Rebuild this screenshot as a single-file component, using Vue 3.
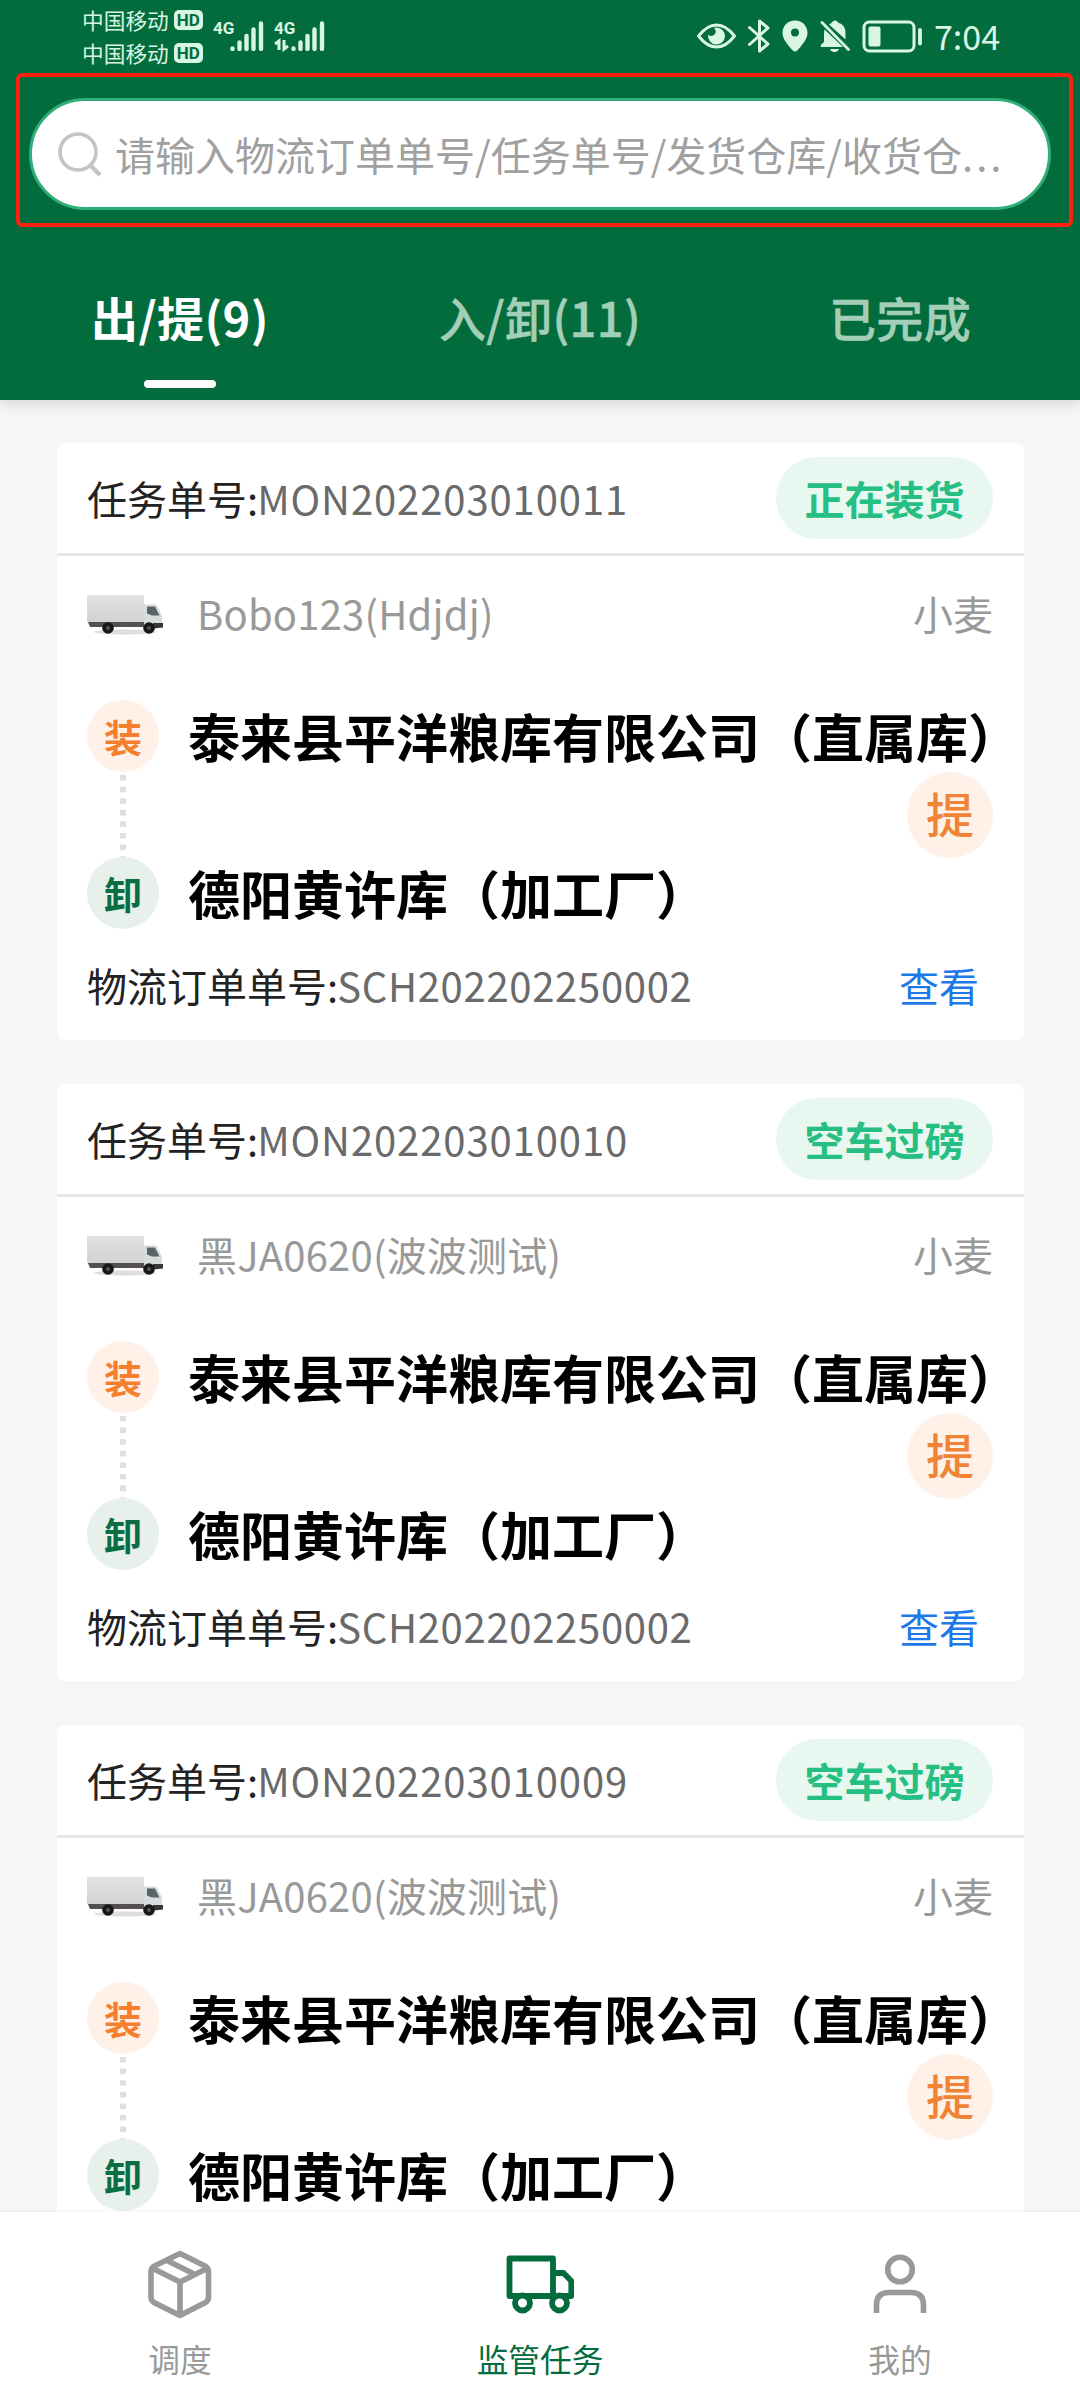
<template>
  <div class="page">
    <header class="header">
      <div class="status-bar">
        <div class="carriers">
          <div v-for="n in 2" :key="n" class="carrier">
            <span>中国移动</span>
            <span class="hd">HD</span>
          </div>
        </div>
        <div v-for="n in 2" :key="'s' + n" class="signal">
          <span class="net">4G</span>
          <svg width="52" height="34" viewBox="0 0 52 34">
            <g stroke="currentColor" stroke-width="4.4" stroke-linecap="round">
              <path d="M19.500 28.500v.4M26.500 22.500v6.400M33.500 16v12.900M40.500 9.500v19.400M48 3.500v25.400" />
            </g>
            <path v-if="n === 2" d="M1 24l4-3v9M10 20v9l4-3" fill="none" stroke="currentColor" stroke-width="3" />
          </svg>
        </div>
        <div class="status-right">
          <svg width="39" height="32" viewBox="0 0 39 32">
            <path d="M1.500 16Q10 5 19.500 5T37.500 16Q29 27 19.500 27T1.500 16z" fill="none" stroke="currentColor" stroke-width="3" stroke-linejoin="round" />
            <path d="M19.500 7.500a8.500 8.500 0 1 1-8.400 7.200q3.400 2.600 6.400-.2 2.600-3-.4-6.600z" fill="currentColor" />
          </svg>
          <svg width="22" height="34" viewBox="0 0 22 34">
            <path d="M1.500 8.500L20 25l-8.500 7V2L20 9 1.500 25.500" fill="none" stroke="currentColor" stroke-width="3" stroke-linejoin="round" stroke-linecap="round" />
          </svg>
          <svg width="26" height="32" viewBox="0 0 26 32">
            <path fill-rule="evenodd" d="M13 .5C5.700.5.500 6 .5 12.800.5 19 5 24 10.500 30.300q2.500 2.400 5 0C21 24 25.500 19 25.500 12.800 25.500 6 20.300.5 13 .5zM13 8.500a4 4 0 1 1 0 8 4 4 0 0 1 0-8z" fill="currentColor" />
          </svg>
          <svg width="30" height="33" viewBox="0 0 30 33">
            <path d="M4.500 9.500L23 27H.8v-2l3.200-3V13zM9 4.500l3-2Q13 .5 15 .5t3 2q7.500 2.300 7.500 10v7zM10 29h9q-1 3-4.500 3T10 29z" fill="currentColor" />
            <path d="M2 2.500l26.500 27" stroke="currentColor" stroke-width="2.800" stroke-linecap="round" />
          </svg>
          <svg width="61" height="33" viewBox="0 0 61 33">
            <rect x="2" y="2" width="50" height="29" rx="5.500" fill="none" stroke="currentColor" stroke-width="3" />
            <rect x="6.500" y="6.500" width="12" height="20" rx="2" fill="currentColor" />
            <path d="M58 10v13.500" stroke="currentColor" stroke-width="3.800" stroke-linecap="round" />
          </svg>
          <span class="time">7:04</span>
        </div>
      </div>

      <div class="search-frame">
        <div class="search">
          <svg width="44" height="46" viewBox="0 0 44 46" fill="none" stroke="#c4c4c4" stroke-width="3.600">
            <circle cx="20" cy="21" r="18" />
            <path d="M31.500 33.500L42 44" stroke-width="4.500" />
          </svg>
          <span class="placeholder">请输入物流订单单号/任务单号/发货仓库/收货仓<i>...</i></span>
        </div>
      </div>

      <nav class="tabs">
        <button v-for="(tab, i) in tabs" :key="tab" class="tab" :class="{ active: i === current }" @click="current = i">
          {{ tab }}
        </button>
      </nav>
    </header>

    <main class="list">
      <article v-for="task in tasks" :key="task.no" class="card">
        <div class="card-head">
          <div class="label">任务单号:<span class="code">{{ task.no }}</span></div>
          <span class="status">{{ task.status }}</span>
        </div>

        <div class="vehicle">
          <svg class="truck" width="78" height="42" viewBox="0 0 78 42">
            <defs>
              <linearGradient id="box" x1="0" y1="0" x2="0" y2="1">
                <stop offset="0" stop-color="#e2e2e1" />
                <stop offset="1" stop-color="#d2d2d2" />
              </linearGradient>
            </defs>
            <ellipse cx="38" cy="38" rx="31" ry="2.500" fill="#dedede" />
            <path d="M1 28h56v5H3z" fill="#55504d" />
            <path d="M0 1h57v27H0z" fill="url(#box)" />
            <path d="M57 10.500h11q2 0 3.200 3L75 22v11H57z" fill="#d9dcdd" />
            <path d="M60 12.500h8l4.500 9H65l-5-2z" fill="#596469" />
            <path d="M66 29h10v4.500l-10 1z" fill="#35373a" />
            <circle cx="21" cy="34" r="5.800" fill="#17181a" />
            <circle cx="62" cy="34" r="5.800" fill="#17181a" />
            <circle cx="21" cy="34" r="2" fill="#555" />
            <circle cx="62" cy="34" r="2" fill="#555" />
          </svg>
          <span class="plate">{{ task.vehicle }}</span>
          <span class="goods">小麦</span>
        </div>

        <div class="route">
          <div class="stop">
            <span class="dot load">装</span>
            <h3>泰来县平洋粮库有限公司（直属库）</h3>
          </div>
          <div class="between">
            <svg width="6" height="88" viewBox="0 0 6 88">
              <path d="M3 3v85" stroke="#dfdfdf" stroke-width="6" stroke-dasharray="5.600 6" />
            </svg>
            <span class="pick">提</span>
          </div>
          <div class="stop">
            <span class="dot unload">卸</span>
            <h3>德阳黄许库（加工厂）</h3>
          </div>
        </div>

        <div v-if="task.order" class="card-foot">
          <div class="label">物流订单单号:<span class="code">{{ task.order }}</span></div>
          <a class="view">查看</a>
        </div>
      </article>
    </main>

    <footer class="tabbar">
      <div class="tabbar-item">
        <svg width="68" height="72" viewBox="0 0 68 72" fill="none" stroke="currentColor" stroke-width="5.600" stroke-linejoin="round">
          <path d="M34 5.500L59 18q3.500 2 3.500 5.500v26q0 3-3 5L34 67.500 8 54.500q-3-2-3-5v-26Q5 20 8.500 18zM7 20.500L34 34l27-13.500M34 34v33" />
          <path d="M21 12.500L48 26" />
        </svg>
        <span>调度</span>
      </div>
      <div class="tabbar-item active">
        <svg width="68" height="72" viewBox="0 0 68 72" fill="none" stroke="currentColor" stroke-width="5.800" stroke-linejoin="round">
          <path d="M3.500 10.500h43.500v37.500H3.500zM47 25h10.500l7.800 8v15H47" />
          <circle cx="16.500" cy="55" r="7.500" fill="#fff" />
          <circle cx="53.500" cy="55" r="7.500" fill="#fff" />
        </svg>
        <span>监管任务</span>
      </div>
      <div class="tabbar-item">
        <svg width="68" height="72" viewBox="0 0 68 72" fill="none" stroke="currentColor" stroke-width="5.600">
          <circle cx="34" cy="21.500" r="12.300" />
          <path d="M10.500 65V57q0-12.500 12.500-12.500h22q12.500 0 12.500 12.500v8" />
        </svg>
        <span>我的</span>
      </div>
    </footer>
  </div>
</template>

<script setup>
import { ref } from 'vue'

const current = ref(0)
const tabs = ['出/提(9)', '入/卸(11)', '已完成']
const tasks = [
  { no: 'MON202203010011', status: '正在装货', vehicle: 'Bobo123(Hdjdj)', order: 'SCH202202250002' },
  { no: 'MON202203010010', status: '空车过磅', vehicle: '黑JA0620(波波测试)', order: 'SCH202202250002' },
  { no: 'MON202203010009', status: '空车过磅', vehicle: '黑JA0620(波波测试)' }
]
</script>

<style>
body { background: #f6f6f8; }
</style>

<style scoped>
* { box-sizing: border-box; }
.page {
  width: 1080px;
  height: 2400px;
  display: flex;
  flex-direction: column;
  overflow: hidden;
  background: #f6f6f8;
  font-family: "Noto Sans CJK SC", "Noto Sans", sans-serif;
}
svg { display: block; flex: none; }

.header {
  flex: none;
  height: 400px;
  display: flex;
  flex-direction: column;
  background: #036c3d;
  box-shadow: 0 2px 14px rgba(0,0,0,0.16);
  z-index: 1;
}
.status-bar {
  height: 73px;
  flex: none;
  display: flex;
  align-items: flex-start;
  padding: 3px 80px 0 82px;
  color: #d9f5e3;
}
.carriers { width: 131px; }
.carrier { display: flex; align-items: center; height: 33px; gap: 5px; font-size: 21.700px; font-weight: 400; }
.hd {
  width: 29px;
  height: 20px;
  border-radius: 5px;
  background: #d9f5e3;
  color: #036c3d;
  font: 700 17px/20px Roboto, sans-serif;
  text-align: center;
}
.signal { width: 61px; padding-top: 16px; display: flex; flex-direction: column; }
.signal svg { margin-top: -17px; }
.net { font: 700 17px/18px Roboto, sans-serif; }
.status-right { margin-left: auto; height: 66px; display: flex; align-items: center; gap: 11px; }
.status-right svg { margin-right: 1px; }
.time { margin-left: -1px; font-size: 34px; line-height: 40px; }

.search-frame {
  flex: none;
  height: 154px;
  margin: 0 7px 0 16px;
  padding: 21px 18px 13px 9px;
  border: 4px solid #ff1e10;
  border-radius: 6px;
}
.search {
  height: 112px;
  border: 3px solid #2fae78;
  border-radius: 56px;
  background: #fff;
  display: flex;
  align-items: center;
  gap: 13px;
  padding-left: 26px;
}
.placeholder { font-size: 40px; line-height: 60px; color: #a0a0a0; white-space: nowrap; }
.placeholder i { font-style: normal; letter-spacing: 3px; }

.tabs { display: flex; flex: 1; }
.tab {
  flex: 1;
  display: flex;
  flex-direction: column;
  align-items: center;
  border: none;
  background: none;
  padding: 55px 0 0;
  color: #a3cfb8;
  font: 500 47px/70px "Noto Sans CJK SC", sans-serif;
  letter-spacing: 0.400px;
  -webkit-text-stroke: 0.500px currentColor;
}
.tab.active { color: #fff; font-weight: 700; -webkit-text-stroke: 0; }
.tab.active::after { content: ''; width: 72px; height: 8px; margin-top: 28px; border-radius: 4px; background: #fff; }

.list { flex: 1; min-height: 0; overflow: hidden; padding: 43px 56px 0 57px; }
.card { height: 597px; margin-bottom: 44px; padding: 0 31px 0 30px; background: #fff; border-radius: 8px; color: #222; font-size: 40px; line-height: 60px; }
.card-head { height: 113px; margin: 0 -31px 0 -30px; padding: 0 31px 0 30px; border-bottom: 3px solid #e6e6e8; display: flex; align-items: center; justify-content: space-between; }
.code { margin-left: -1px; color: #6a6a6a; letter-spacing: 0.700px; }
.card-head .code { letter-spacing: 0.900px; }
.status {
  width: 217px;
  height: 82px;
  border-radius: 41px;
  background: #e8f8f1;
  color: #26bf83;
  font-weight: 700;
  line-height: 82px;
  text-align: center;
}
.vehicle { height: 118px; display: flex; align-items: center; color: #999; }
.plate { margin-left: 32px; letter-spacing: 0.200px; }
.goods { margin-left: auto; }
.plate, .goods { margin-top: -4px; }
.route { margin-top: 26px; }
.stop { height: 72px; display: flex; align-items: center; }
.dot { flex: none; width: 72px; height: 72px; border-radius: 50%; font-size: 38px; line-height: 72px; font-weight: 700; text-align: center; }
.load { background: #fff1e7; color: #f57f2c; }
.unload { background: #e7f0eb; color: #0b6e42; }
h3 { margin: 0 0 0 29px; font-size: 52px; line-height: 72px; font-weight: 700; color: #000; white-space: nowrap; }
.between { height: 85px; display: flex; justify-content: space-between; padding-left: 33px; }
.pick { width: 86px; height: 86px; border-radius: 50%; background: #fff1e8; color: #f08436; font-size: 48px; line-height: 80px; font-weight: 500; text-align: center; }
.card-foot { height: 60px; margin-top: 26px; padding-right: 14px; display: flex; justify-content: space-between; }
.view { color: #1f78e8; }

.tabbar { flex: none; height: 188px; display: flex; background: #fff; z-index: 1; box-shadow: 0 -1px 3px rgba(0,0,0,0.05); }
.tabbar-item { flex: 1; display: flex; flex-direction: column; align-items: center; padding-top: 36px; color: #999; font-size: 31.700px; line-height: 46px; }
.tabbar-item span { margin-top: 15px; }
.tabbar-item.active { color: #036c3d; }
</style>
